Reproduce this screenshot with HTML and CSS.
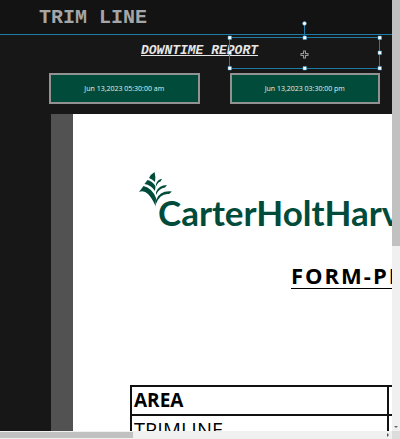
FILE: index.html
```html
<!DOCTYPE html>
<html lang="en">
<head>
<meta charset="utf-8">
<title>Trim Line</title>
<link rel="stylesheet" href="styles.css">
</head>
<body>
<div class="viewer">
  <main class="canvas">
    <header class="header"><h1>TRIM LINE</h1></header>
    <section class="report">
      <h2>DOWNTIME REPORT</h2>
      <div class="selection">
        <svg class="frame" viewBox="0 0 160 60" aria-hidden="true">
          <g fill="none" stroke="#1d7ba6">
            <path d="M5.500 21.500H155.500V52.500H5.500Z M80.500 8V21"/>
          </g>
          <g fill="#fff" stroke="#2a9bd0" stroke-width=".5">
            <path d="M4 20h3.500v3.500h-3.500z M79 20h3.500v3.500h-3.500z M154 20h3.500v3.500h-3.500z M4 35h3.500v3.500h-3.500z M154 35h3.500v3.500h-3.500z M4 50.500h3.500v3.500h-3.500z M79 50.500h3.500v3.500h-3.500z M154 50.500h3.500v3.500h-3.500z"/>
            <circle cx="80.500" cy="7.500" r="1.900"/>
          </g>
          <path d="M80.500 34.500v8M76.500 38.500h8" stroke="#999" stroke-width="3"/>
          <path d="M80.500 35.500v6M77.500 38.500h6" stroke="#222"/>
        </svg>
      </div>
      <div class="dates">
        <button type="button">Jun 13,2023 05:30:00 am</button>
        <button type="button">Jun 13,2023 03:30:00 pm</button>
      </div>
    </section>
    <article class="sheet">
      <div class="brand">
        <svg class="fern" viewBox="0 0 34 36" aria-hidden="true">
          <g fill="#004b3a">
            <path d="M15.500 0Q12 2 10 6Q13 7 16 10Q17 5 15.500 0Z"/>
            <path d="M8.500 8L5.500 12Q12 13 16 19L16.500 14Q13 9 8.500 8Z"/>
            <path d="M4.500 14L0 20Q5 18 9 22Q13 26 16.500 34L17 26Q13 16 4.500 14Z"/>
            <path d="M17 12Q19 7 23 7L21.500 9.500Q19 10 17 14.500Z"/>
            <path d="M17 20Q20 13 28 13L26 15.500Q20 16 17 23Z"/>
            <path d="M17 28Q21 18 33 19.500L30 22Q21 21 17 32L16.500 36Z"/>
          </g>
        </svg>
        <span class="wordmark">CarterHoltHarvey</span>
      </div>
      <h3>FORM-PR</h3>
      <table>
        <tbody>
          <tr><th scope="row">AREA</th><td></td></tr>
          <tr><td>TRIMLINE</td><td></td></tr>
        </tbody>
      </table>
    </article>
  </main>
  <div class="vbar"><div class="vthumb"></div><svg viewBox="0 0 8 8" aria-hidden="true"><path d="M2 3h4L4 5z" fill="#666"/></svg></div>
  <div class="hbar"><div class="hthumb"></div><svg viewBox="0 0 8 8" aria-hidden="true"><path d="M3 2v4L5 4z" fill="#555"/></svg></div>
  <div class="corner"></div>
</div>
</body>
</html>
```
FILE: styles.css
```css
* { box-sizing: border-box; }
body { margin: 0; font-family: "Open Sans", "Noto Sans", sans-serif; }
h1, h2, h3 { margin: 0; }
.viewer {
  height: 100vh;
  display: grid;
  grid-template: minmax(0, 1fr) 8px / minmax(0, 1fr) 8px;
}
.canvas {
  overflow: hidden;
  background: #171717;
  display: flex;
  flex-direction: column;
}
.header {
  flex: none;
  height: 35px;
  padding: 1px 0 0 39px;
  background: #131313;
  border-bottom: 1px solid #1d7ba6;
}
h1 {
  font: bold 20px/34px "Courier New", "Liberation Mono", monospace;
  color: #a6a6a6;
}
.report {
  flex: none;
  position: relative;
  height: 79px;
  padding: 7px 12px 0 49px;
}
h2 {
  padding-left: 92px;
  font: italic bold 13px/18px "Courier New", "Liberation Mono", monospace;
  color: #e6e6e6;
  text-decoration: underline;
  white-space: nowrap;
}
.selection { position: absolute; left: 224px; top: -19px; }
.frame { display: block; width: 160px; height: 60px; }
.dates { display: flex; gap: 30px; padding-top: 13px; }
button {
  flex: 1;
  height: 31px;
  padding: 0;
  border: 2px solid #929292;
  background: #004b3a;
  color: #e4efec;
  font: 7px/10px "Open Sans", "Noto Sans", sans-serif;
}
.sheet {
  flex: 1 0 auto;
  margin-left: 51px;
  padding-top: 58px;
  border-left: 22px solid #525252;
  background: #fff;
  color: #000;
}
.brand { display: flex; padding-left: 66px; height: 60px; }
.fern { flex: none; width: 34px; height: 36px; margin-right: -15px; }
.wordmark {
  padding-top: 18px;
  font: bold 35px/44px Lato, sans-serif;
  color: #004b3a;
}
h3 {
  padding: 28px 0 0 218px;
  font-size: 22px;
  line-height: 30px;
  letter-spacing: 2px;
  text-decoration: underline 1px;
  text-underline-offset: 4px;
  white-space: nowrap;
}
table {
  margin: 95px 0 0 57px;
  width: 400px;
  table-layout: fixed;
  border-collapse: collapse;
}
th, td {
  height: 29px;
  padding: 0 2px;
  border: 2px solid #111;
  font-size: 19px;
  line-height: 27px;
  text-align: left;
}
td { font-size: 20px; }
th:first-child, td:first-child { width: 257px; }
.vbar, .hbar { display: flex; justify-content: space-between; background: #f0f0f0; }
.vbar { flex-direction: column; }
.vthumb { height: 57%; background: #c1c1c1; }
.hthumb { width: 34%; margin: 1px 0; background: #c1c1c1; }
.vbar svg, .hbar svg { width: 8px; height: 8px; }
.corner { background: #dcdcdc; }
```
